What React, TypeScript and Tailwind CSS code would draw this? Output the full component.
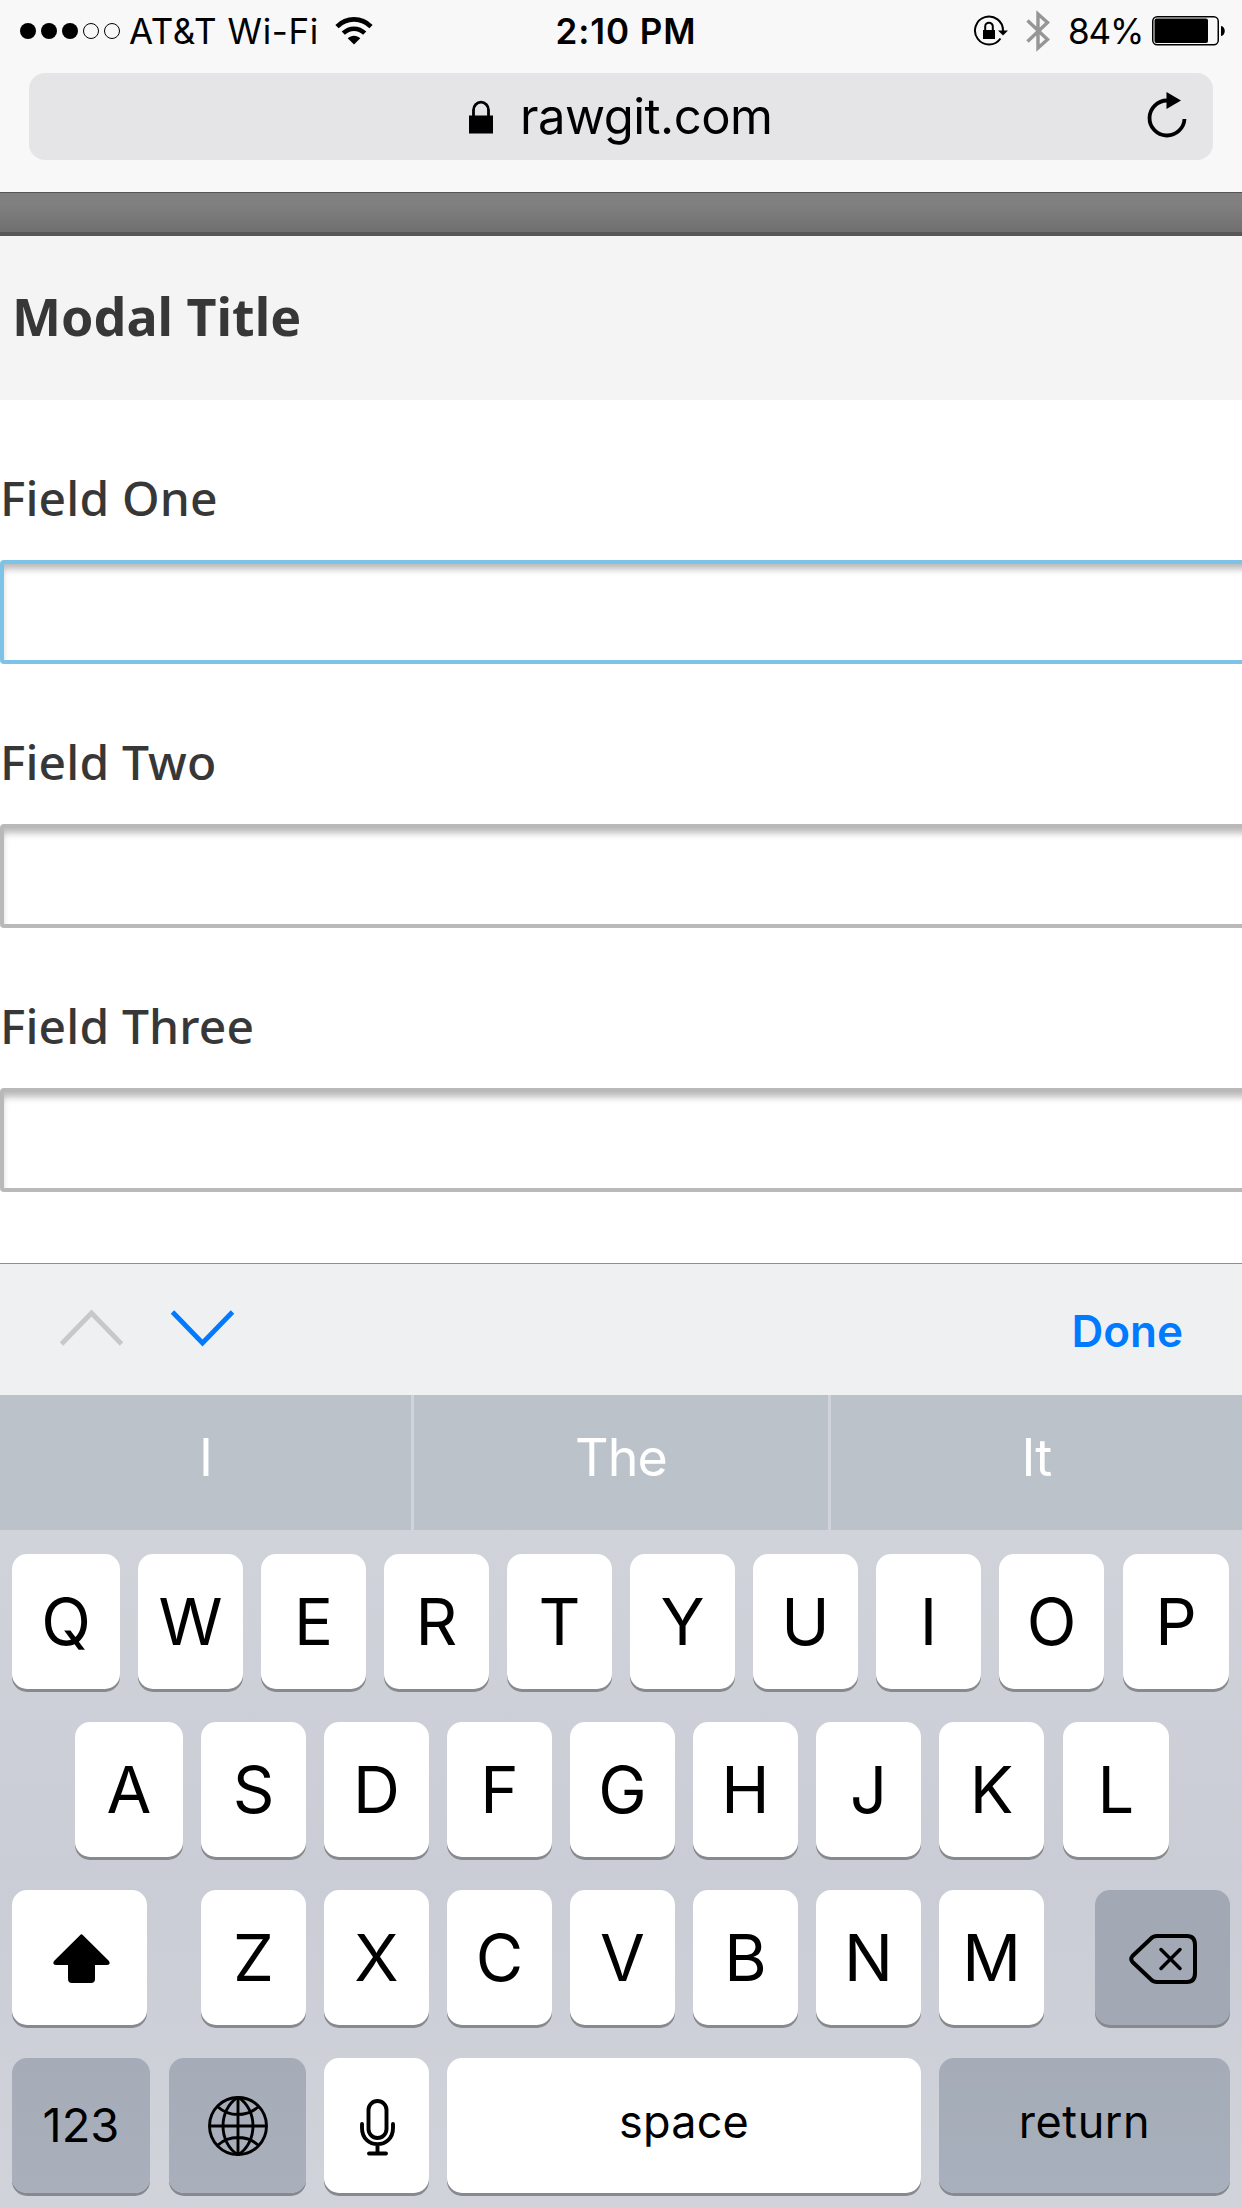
import React from "react";

const sans = "font-['Inter','Liberation_Sans',sans-serif]";

function StatusBar() {
  return (
    <div className="grid h-[72px] grid-cols-3 items-start text-[35px] leading-[44px] text-black">
      <div className="flex items-center pt-[8px] pl-[20px]">
        <div className="flex gap-[5px]">
          <span className="size-4 rounded-full bg-black" />
          <span className="size-4 rounded-full bg-black" />
          <span className="size-4 rounded-full bg-black" />
          <span className="size-4 rounded-full border border-black" />
          <span className="size-4 rounded-full border border-black" />
        </div>
        <span className="ml-[9px] w-[198px] font-[390] tracking-[0.6px] whitespace-nowrap">AT&amp;T Wi-Fi</span>
        <svg className="ml-[8px] h-[28px] w-[38px]" viewBox="0 0 38 28" fill="none" stroke="#000" strokeWidth="4.6">
          <path d="M2 9.600C11.500 0 26.500 0 36 9.600" />
          <path d="M8.300 16.200C14.500 10.200 23.500 10.200 29.700 16.200" />
          <path d="M19 27.500L12.700 21.200C16.400 17.800 21.600 17.800 25.300 21.200Z" fill="#000" stroke="none" />
        </svg>
      </div>
      <div className="pt-[8px] pl-[10px] text-center font-semibold tracking-[0.9px] whitespace-nowrap">2:10 PM</div>
      <div className="flex items-center justify-end pt-[8px] pr-[16px]">
        <svg className="h-[32px] w-[36px]" viewBox="0 0 36 32" fill="none" stroke="#000">
          <path d="M27.500 23.500A14 14 0 1 1 30 16" strokeWidth="2" />
          <path d="M25 15.500H35L30 20.500Z" fill="#000" stroke="none" />
          <rect x="10" y="15" width="12" height="9" fill="#000" stroke="none" />
          <path d="M12.200 15V11.500A3.800 3.800 0 0 1 19.800 11.500V15" strokeWidth="2" />
        </svg>
        <svg className="ml-[17px] h-[42px] w-[24px]" viewBox="0 0 24 42" fill="none" stroke="#969696" strokeWidth="3.400">
          <path d="M1.500 10.500L21.500 29.500L12 38V4L21.500 12.500L1.500 31.500" />
        </svg>
        <span className="ml-[18px] w-[74px] font-[390] tracking-[-1.1px] whitespace-nowrap">84%</span>
        <svg className="ml-[10px] h-[30px] w-[74px]" viewBox="0 0 74 30">
          <rect x="0.750" y="0.750" width="65.500" height="28" rx="4.500" fill="none" stroke="#000" strokeWidth="1.500" />
          <rect x="2.500" y="2.500" width="53.500" height="24.500" rx="2" />
          <path d="M69 10C74 10.500 74 19.500 69 20Z" />
        </svg>
      </div>
    </div>
  );
}

function AddressBar() {
  return (
    <div className="mx-[29px] flex h-[87px] items-center rounded-2xl bg-[#e5e5e7] text-black">
      <svg className="ml-[440px] h-[34px] w-[24px]" viewBox="0 0 24 34">
        <rect y="15.500" width="24" height="18" />
        <path d="M4.500 16V10A7.500 7.900 0 0 1 19.500 10V16" fill="none" stroke="#000" strokeWidth="2.800" />
      </svg>
      <span className="ml-[27px] w-[400px] text-[49px] leading-none font-[380] tracking-[-0.5px]">rawgit.com</span>
      <svg className="mt-[-3px] mr-[26px] ml-auto h-[46px] w-[40px]" viewBox="0 0 40 46">
        <path d="M37.500 27A17.500 17.500 0 1 1 20 8.500" fill="none" stroke="#000" strokeWidth="3.800" />
        <path d="M19.500 0V17L34 8.500Z" />
      </svg>
    </div>
  );
}

function Field({ label, focused }: { label: string; focused?: boolean }) {
  return (
    <div className="h-[264px] pt-[65px]">
      <label className="block h-[95px] text-[48px] leading-[66px] font-medium tracking-[0.15px] text-[#373737]">{label}</label>
      <div
        className={
          "h-[104px] w-[1400px] rounded-[4px] border-4 bg-white shadow-[inset_0_7px_7px_-2px_rgba(0,0,0,0.28)] " +
          (focused ? "border-[#7dc3e8]" : "border-[#b9b9b9]")
        }
      />
    </div>
  );
}

function AccessoryBar() {
  return (
    <div className="flex h-[132px] items-center border-t border-[#8f9096] bg-[#eff0f2]">
      <svg className="mt-[-3px] ml-[59px] h-[44px] w-[65px]" viewBox="0 0 65 44" fill="none" stroke="#c7c8c8" strokeWidth="4.800">
        <path d="M2.500 38L32.500 7L62.500 38" />
      </svg>
      <svg className="mt-[-3px] ml-[46px] h-[44px] w-[65px]" viewBox="0 0 65 44" fill="none" stroke="#007aff" strokeWidth="4.800">
        <path d="M2.500 6L32.500 37L62.500 6" />
      </svg>
      <span className="mt-[2px] mr-[59px] ml-auto text-[44px] font-semibold text-[#007aff]">Done</span>
    </div>
  );
}

function Suggestions() {
  return (
    <div className="flex h-[135px] items-center gap-[3px] bg-[#d0d3da] text-center text-[52px] leading-[126px] font-[390] tracking-[-0.8px] text-white">
      <div className="h-full w-[411px] bg-[#bbc2c9]">I</div>
      <div className="h-full w-[414px] bg-[#bbc2c9]">The</div>
      <div className="h-full w-[411px] bg-[#bbc2c9]">It</div>
    </div>
  );
}

function Key({ className, children }: { className?: string; children: React.ReactNode }) {
  return (
    <div
      className={
        "flex h-[135px] shrink-0 items-center justify-center rounded-[15px] font-[370] text-black shadow-[0_3px_0_#868a8e] " +
        (className ?? "w-[105px] bg-white text-[65px]")
      }
    >
      {children}
    </div>
  );
}

const firstKey = "w-[108px] bg-white text-[65px]";
const lastKey = "ml-px w-[106px] bg-white text-[65px]";

function LetterKeys({ letters }: { letters: string }) {
  return (
    <>
      {[...letters].map((k, i) => (
        <Key key={k} className={i === 0 ? firstKey : i === letters.length - 1 ? lastKey : undefined}>
          {k}
        </Key>
      ))}
    </>
  );
}

function Keyboard() {
  return (
    <div className="flex h-[678px] flex-col gap-[33px] bg-linear-to-b from-[#d0d3da] via-[#cacdd5] to-[#d0d3da] pt-[24px]">
      <div className="flex gap-[18px] pl-[12px]">
        <LetterKeys letters="QWERTYUIOP" />
      </div>
      <div className="flex gap-[18px] pl-[75px]">
        <LetterKeys letters="ASDFGHJKL" />
      </div>
      <div className="flex gap-[18px] pl-[12px]">
        <Key className="mr-[36px] w-[135px] bg-white">
          <svg className="mt-[2px] ml-[4px] h-[50px] w-[57px]" viewBox="0 0 57 50">
            <path d="M27 1.200Q28.500 -0.500 30 1.200L56 27Q58 31 54 31H42V45Q42 49 38 49H19Q15 49 15 45V31H3Q-1 31 1 27Z" />
          </svg>
        </Key>
        {[..."ZXCVBNM"].map((k) => (
          <Key key={k}>{k}</Key>
        ))}
        <Key className="ml-[33px] w-[135px] bg-[#a2a8b4]">
          <svg className="mt-[3px] h-[50px] w-[68px]" viewBox="0 0 68 50" fill="none" stroke="#000" strokeWidth="4" strokeLinejoin="round" strokeLinecap="round">
            <path d="M28 2H58Q66 2 66 11V39Q66 48 58 48H28Q24 48 21.500 45L3.500 28Q1 25 3.500 22L21.500 5Q24 2 28 2Z" />
            <path d="M32 15.500L51 34.500M51 15.500L32 34.500" strokeWidth="3.500" />
          </svg>
        </Key>
      </div>
      <div className="flex gap-[18px] pl-[12px]">
        <Key className="w-[138px] bg-linear-to-b from-[#a5acb8] to-[#a9b0bc] text-[47px]">123</Key>
        <Key className="ml-px w-[137px] bg-linear-to-b from-[#a5acb8] to-[#a9b0bc]">
          <svg className="h-[60px] w-[60px]" viewBox="0 0 60 60" fill="none" stroke="#000" strokeWidth="2.900">
            <circle cx="30" cy="30" r="28.500" />
            <path d="M30 1V59M1 30H59M30 1C10 14 10 46 30 59M30 1C50 14 50 46 30 59M10 11C21 21 39 21 50 11M10 49C21 39 39 39 50 49" />
          </svg>
        </Key>
        <Key className="w-[105px] bg-white">
          <svg className="mt-[3px] ml-[2px] h-[57px] w-[35px]" viewBox="0 0 35 57" fill="none" stroke="#000" strokeWidth="3.900" strokeLinecap="round">
            <rect x="8.500" y="2" width="18" height="37" rx="9" />
            <path d="M2 25V29C2 50.500 33 50.500 33 29V25M17.500 46V54M9 54.500H26" />
          </svg>
        </Key>
        <Key className="w-[474px] bg-white pb-[8px] text-[45px] tracking-[0.2px]">space</Key>
        <Key className="w-[291px] bg-linear-to-b from-[#a5acb8] to-[#a7b0bc] pb-[8px] text-[45px] tracking-[0.6px]">return</Key>
      </div>
    </div>
  );
}

export default function App() {
  return (
    <div className={`h-[2208px] w-[1242px] overflow-hidden bg-white ${sans}`}>
      <header className="h-[193px] border-b border-[#555] bg-[#f8f8f8] pt-px">
        <StatusBar />
        <AddressBar />
      </header>
      <div className="h-[43px] border-b-4 border-[#575757] bg-linear-to-b from-[#808080] from-30% to-[#6f6f6f]" />
      <main className="h-[1027px] overflow-hidden bg-white font-['Noto_Sans','Open_Sans',sans-serif]">
        <h1 className="h-[164px] bg-[#f4f4f4] pl-[12px] text-[52px] leading-[160px] font-bold text-[#373737]">Modal Title</h1>
        <Field label="Field One" focused />
        <Field label="Field Two" />
        <Field label="Field Three" />
      </main>
      <AccessoryBar />
      <Suggestions />
      <Keyboard />
    </div>
  );
}
